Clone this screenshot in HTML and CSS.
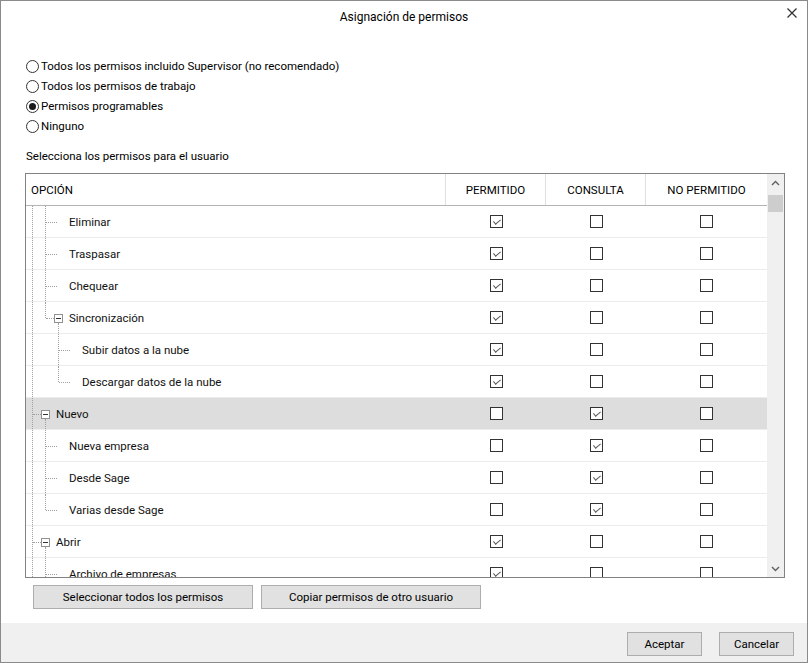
FILE: index.html
```html
<!DOCTYPE html>
<html lang="es">
<head>
<meta charset="utf-8">
<title>Asignación de permisos</title>
<link rel="stylesheet" href="styles.css">
</head>
<body>
<div class="window">
  <header class="titlebar">
    <span class="title">Asignación de permisos</span>
    <span class="close" aria-label="Cerrar">
      <svg width="10" height="10" viewBox="0 0 10 10"><path d="M0.5 0.5 L9.5 9.5 M9.5 0.5 L0.5 9.5" stroke="#333" stroke-width="1.3" fill="none"/></svg>
    </span>
  </header>

  <main class="content">
    <div class="radios">
      <label class="radio"><span class="rb"></span>Todos los permisos incluido Supervisor (no recomendado)</label>
      <label class="radio"><span class="rb"></span>Todos los permisos de trabajo</label>
      <label class="radio"><span class="rb on"></span>Permisos programables</label>
      <label class="radio"><span class="rb"></span>Ninguno</label>
    </div>

    <p class="hint">Selecciona los permisos para el usuario</p>

    <div class="grid">
      <div class="grid-main">
        <div class="head">
          <div class="hc c-opt">OPCIÓN</div>
          <div class="hc c-perm">PERMITIDO</div>
          <div class="hc c-cons">CONSULTA</div>
          <div class="hc c-no">NO PERMITIDO</div>
        </div>
        <div class="body">
          <div class="row">
            <div class="cell c-opt tree"><span class="ind v"></span><span class="ind v"></span><span class="ind leaf"></span><span class="label">Eliminar</span></div>
            <div class="cell c-perm"><span class="cb on"></span></div>
            <div class="cell c-cons"><span class="cb"></span></div>
            <div class="cell c-no"><span class="cb"></span></div>
          </div>
          <div class="row">
            <div class="cell c-opt tree"><span class="ind v"></span><span class="ind v"></span><span class="ind leaf"></span><span class="label">Traspasar</span></div>
            <div class="cell c-perm"><span class="cb on"></span></div>
            <div class="cell c-cons"><span class="cb"></span></div>
            <div class="cell c-no"><span class="cb"></span></div>
          </div>
          <div class="row">
            <div class="cell c-opt tree"><span class="ind v"></span><span class="ind v"></span><span class="ind leaf"></span><span class="label">Chequear</span></div>
            <div class="cell c-perm"><span class="cb on"></span></div>
            <div class="cell c-cons"><span class="cb"></span></div>
            <div class="cell c-no"><span class="cb"></span></div>
          </div>
          <div class="row">
            <div class="cell c-opt tree"><span class="ind v"></span><span class="ind half"></span><span class="ind node"><span class="tbox"></span></span><span class="label">Sincronización</span></div>
            <div class="cell c-perm"><span class="cb on"></span></div>
            <div class="cell c-cons"><span class="cb"></span></div>
            <div class="cell c-no"><span class="cb"></span></div>
          </div>
          <div class="row">
            <div class="cell c-opt tree"><span class="ind v"></span><span class="ind"></span><span class="ind v"></span><span class="ind leaf"></span><span class="label">Subir datos a la nube</span></div>
            <div class="cell c-perm"><span class="cb on"></span></div>
            <div class="cell c-cons"><span class="cb"></span></div>
            <div class="cell c-no"><span class="cb"></span></div>
          </div>
          <div class="row">
            <div class="cell c-opt tree"><span class="ind v"></span><span class="ind"></span><span class="ind half"></span><span class="ind leaf"></span><span class="label">Descargar datos de la nube</span></div>
            <div class="cell c-perm"><span class="cb on"></span></div>
            <div class="cell c-cons"><span class="cb"></span></div>
            <div class="cell c-no"><span class="cb"></span></div>
          </div>
          <div class="row selected">
            <div class="cell c-opt tree"><span class="ind v"></span><span class="ind node"><span class="tbox"></span></span><span class="label">Nuevo</span></div>
            <div class="cell c-perm"><span class="cb"></span></div>
            <div class="cell c-cons"><span class="cb on"></span></div>
            <div class="cell c-no"><span class="cb"></span></div>
          </div>
          <div class="row">
            <div class="cell c-opt tree"><span class="ind v"></span><span class="ind v"></span><span class="ind leaf"></span><span class="label">Nueva empresa</span></div>
            <div class="cell c-perm"><span class="cb"></span></div>
            <div class="cell c-cons"><span class="cb on"></span></div>
            <div class="cell c-no"><span class="cb"></span></div>
          </div>
          <div class="row">
            <div class="cell c-opt tree"><span class="ind v"></span><span class="ind v"></span><span class="ind leaf"></span><span class="label">Desde Sage</span></div>
            <div class="cell c-perm"><span class="cb"></span></div>
            <div class="cell c-cons"><span class="cb on"></span></div>
            <div class="cell c-no"><span class="cb"></span></div>
          </div>
          <div class="row">
            <div class="cell c-opt tree"><span class="ind v"></span><span class="ind half"></span><span class="ind leaf"></span><span class="label">Varias desde Sage</span></div>
            <div class="cell c-perm"><span class="cb"></span></div>
            <div class="cell c-cons"><span class="cb on"></span></div>
            <div class="cell c-no"><span class="cb"></span></div>
          </div>
          <div class="row">
            <div class="cell c-opt tree"><span class="ind v"></span><span class="ind node"><span class="tbox"></span></span><span class="label">Abrir</span></div>
            <div class="cell c-perm"><span class="cb on"></span></div>
            <div class="cell c-cons"><span class="cb"></span></div>
            <div class="cell c-no"><span class="cb"></span></div>
          </div>
          <div class="row">
            <div class="cell c-opt tree"><span class="ind v"></span><span class="ind v"></span><span class="ind leaf"></span><span class="label">Archivo de empresas</span></div>
            <div class="cell c-perm"><span class="cb on"></span></div>
            <div class="cell c-cons"><span class="cb"></span></div>
            <div class="cell c-no"><span class="cb"></span></div>
          </div>
        </div>
      </div>
      <div class="vscroll">
        <span class="sb-arrow">
          <svg width="9" height="6" viewBox="0 0 9 6"><path d="M1 5 L4.5 1.5 L8 5" stroke="#606060" stroke-width="1.4" fill="none"/></svg>
        </span>
        <span class="sb-thumb"></span>
        <span class="sb-track"></span>
        <span class="sb-arrow">
          <svg width="9" height="6" viewBox="0 0 9 6"><path d="M1 1 L4.5 4.5 L8 1" stroke="#606060" stroke-width="1.4" fill="none"/></svg>
        </span>
      </div>
    </div>

    <div class="actions">
      <button class="btn btn-wide">Seleccionar todos los permisos</button>
      <button class="btn btn-wide">Copiar permisos de otro usuario</button>
    </div>
  </main>

  <footer class="footer">
    <button class="btn btn-dlg">Aceptar</button>
    <button class="btn btn-dlg">Cancelar</button>
  </footer>
</div>
</body>
</html>
```

FILE: styles.css
```css
* { box-sizing: border-box; }

html, body {
  margin: 0;
  padding: 0;
  background: #ffffff;
}

.window {
  width: 808px;
  height: 663px;
  border: 1px solid #8a8a8a;
  background: #ffffff;
  display: flex;
  flex-direction: column;
  font-family: Roboto, "Noto Sans", sans-serif;
  font-size: 11.5px;
  line-height: 16px;
  color: #000;
}

/* title bar */
.titlebar {
  height: 31px;
  flex: none;
  display: flex;
  align-items: center;
  justify-content: center;
  position: relative;
}

.title { font-size: 12px; }

.close {
  position: absolute;
  right: 10px;
  top: 7px;
  width: 10px;
  height: 10px;
  display: flex;
}

/* content */
.content {
  flex: 1;
  padding: 24px 0 0 24px;
  display: flex;
  flex-direction: column;
}

.radios {
  display: flex;
  flex-direction: column;
  padding-left: 1px;
}

.radio {
  height: 20px;
  display: flex;
  align-items: center;
  gap: 2px;
}

.rb {
  width: 13px;
  height: 13px;
  border: 1px solid #333;
  border-radius: 50%;
  display: flex;
  align-items: center;
  justify-content: center;
  background: #fff;
}

.rb.on::after {
  content: "";
  width: 7px;
  height: 7px;
  border-radius: 50%;
  background: #1a1a1a;
}

.hint {
  margin: 10px 0 0 1px;
  height: 20px;
  display: flex;
  align-items: center;
}

/* grid */
.grid {
  margin-top: 7px;
  width: 760px;
  height: 405px;
  border: 1px solid #828282;
  display: flex;
}

.grid-main {
  width: 741px;
  display: flex;
  flex-direction: column;
}

.head {
  height: 32px;
  flex: none;
  display: flex;
  border-bottom: 1px solid #b4b4b4;
}

.hc {
  display: flex;
  align-items: center;
  justify-content: center;
  border-right: 1px solid #e0e0e0;
}

.hc.c-opt {
  justify-content: flex-start;
  padding-left: 5px;
}

.hc.c-no { border-right: none; }

.c-opt { width: 420px; }
.c-perm { width: 100px; }
.c-cons { width: 100px; }
.c-no { width: 121px; }

.body {
  flex: 1;
  overflow: hidden;
}

.row {
  height: 32px;
  display: flex;
  border-bottom: 1px solid #ececec;
  background: #fff;
}

.row.selected { background: #dddddd; }

.cell {
  display: flex;
  align-items: center;
  justify-content: center;
}

.cell.tree {
  justify-content: flex-start;
  align-items: stretch;
}

.ind {
  width: 13px;
  flex: none;
  position: relative;
}

.ind.v::before,
.ind.half::before {
  content: "";
  position: absolute;
  left: 6px;
  top: 0;
  bottom: 0;
  border-left: 1px dotted #a0a0a0;
}

.ind.half::before { bottom: 50%; }

.ind.leaf::after {
  content: "";
  position: absolute;
  left: -6px;
  width: 11px;
  top: 50%;
  border-top: 1px dotted #a0a0a0;
}

.ind.node::after {
  content: "";
  position: absolute;
  left: -6px;
  width: 8px;
  top: 50%;
  border-top: 1px dotted #a0a0a0;
}

.ind.node::before {
  content: "";
  position: absolute;
  left: 6px;
  top: calc(50% + 5px);
  bottom: 0;
  border-left: 1px dotted #a0a0a0;
}

.tbox {
  position: absolute;
  left: 2px;
  top: calc(50% - 4px);
  width: 9px;
  height: 9px;
  border: 1px solid #919191;
  background: #fff;
}

.tbox::after {
  content: "";
  position: absolute;
  left: 1px;
  top: 3px;
  width: 5px;
  height: 1px;
  background: #333;
}

.label {
  display: flex;
  align-items: center;
  margin-left: 4px;
  white-space: nowrap;
  color: #111;
}

.cb {
  width: 13px;
  height: 13px;
  border: 1px solid #333;
  background: #fff;
  position: relative;
}

.cb.on::after {
  content: "";
  position: absolute;
  left: 2px;
  top: 1px;
  width: 6px;
  height: 3px;
  border-left: 1px solid #555;
  border-bottom: 1px solid #555;
  transform: translate(0.5px, 2px) rotate(-40deg);
  transform-origin: center;
}

/* scrollbar */
.vscroll {
  width: 17px;
  background: #f0f0f0;
  display: flex;
  flex-direction: column;
}

.sb-arrow {
  height: 17px;
  flex: none;
  display: flex;
  align-items: center;
  justify-content: center;
}

.sb-thumb {
  height: 17px;
  margin: 4px 1px 0;
  background: #cdcdcd;
  flex: none;
}

.sb-track { flex: 1; }

/* buttons */
.btn {
  font-family: inherit;
  font-size: 11.5px;
  color: #000;
  background: #e1e1e1;
  border: 1px solid #adadad;
  padding: 0;
  height: 24px;
}

.actions {
  margin-top: 7px;
  padding-left: 8px;
  display: flex;
  gap: 8px;
}

.btn-wide { width: 220px; }

.footer {
  height: 39px;
  flex: none;
  background: #f0f0f0;
  display: flex;
  justify-content: flex-end;
  align-items: flex-start;
  padding: 9px 13px 0 0;
  gap: 17px;
}

.btn-dlg { width: 75px; }
```
